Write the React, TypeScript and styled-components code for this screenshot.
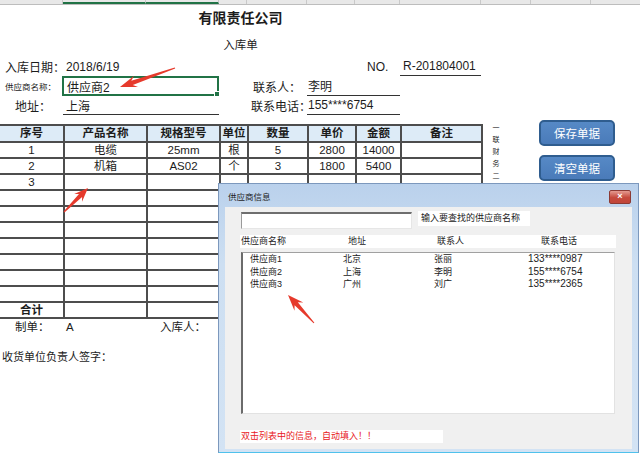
import styled, { createGlobalStyle } from "styled-components";

const FONT = `"Liberation Sans", "Noto Sans CJK SC", sans-serif`;
const COLS = [63, 83, 73, 28, 60, 48, 45, 81];
const GRID = COLS.map((w) => `${w}px`).join(" ");

const GlobalStyle = createGlobalStyle`
  html, body { margin: 0; padding: 0; background: #fff; }
  body { font-family: ${FONT}; color: #1c1c1c; }
`;

const Page = styled.div`
  position: relative;
  width: 640px;
  height: 453px;
  overflow: hidden;
  background: #fff;
`;

const ColumnStrip = styled.div`
  display: flex;
  height: 4px;
  background: #e8e8e8;
  border-bottom: 1px solid #bdbdbd;
`;

const StripCell = styled.div<{ $w: number; $sel?: boolean }>`
  flex: 0 0 ${(p) => p.$w}px;
  box-sizing: border-box;
  border-right: 1px solid #c9c9c9;
  border-bottom: ${(p) => (p.$sel ? "2px solid #217346" : "none")};
`;

const Title = styled.div`
  width: 481px;
  margin-top: 1px;
  text-align: center;
  font-size: 14px;
  font-weight: bold;
  line-height: 24px;
`;

const Subtitle = styled.div`
  width: 481px;
  margin-top: 6px;
  text-align: center;
  font-size: 11.5px;
  line-height: 18px;
`;

const InfoGrid = styled.div`
  display: grid;
  grid-template-columns: ${GRID};
  grid-template-rows: 19px 20px 19px;
  margin-top: 3px;
  font-size: 12px;
`;

const Cell = styled.div<{
  $row: number;
  $col: number;
  $span?: number;
  $pad?: number;
  $line?: boolean;
  $small?: boolean;
}>`
  grid-row: ${(p) => p.$row};
  grid-column: ${(p) => p.$col} / span ${(p) => p.$span ?? 1};
  display: flex;
  align-items: center;
  padding-left: ${(p) => p.$pad ?? 0}px;
  font-size: ${(p) => (p.$small ? "8.5px" : "12px")};
  border-bottom: ${(p) => (p.$line ? "1px solid #333" : "none")};
  white-space: nowrap;
`;

const InputBox = styled.div`
  grid-row: 2;
  grid-column: 2 / span 2;
  position: relative;
  display: flex;
  align-items: center;
  padding-left: 3px;
  border: 2px solid #217346;
  margin-left: -1px;
  font-size: 12px;
`;

const Handle = styled.span`
  position: absolute;
  right: -3px;
  bottom: -3px;
  width: 4px;
  height: 4px;
  background: #217346;
  border: 1px solid #fff;
`;

const TableRow = styled.div`
  display: flex;
  align-items: flex-start;
  margin-top: 9px;
`;

const Sheet = styled.table`
  border-collapse: collapse;
  table-layout: fixed;
  width: 483px;
  margin-left: -2px;
  font-size: 11.5px;
`;

const Col = styled.col<{ $w: number }>`
  width: ${(p) => p.$w}px;
`;

const Th = styled.th`
  height: 15px;
  padding: 0;
  border: 2px solid #4d4d4d;
  background: #ddebf7;
  font-weight: bold;
  text-align: center;
  line-height: 15px;
`;

const Td = styled.td<{ $bold?: boolean }>`
  height: 14px;
  padding: 0;
  border: 2px solid #4d4d4d;
  text-align: center;
  line-height: 14px;
  font-weight: ${(p) => (p.$bold ? "bold" : "normal")};
`;

const SideNote = styled.div`
  display: flex;
  flex-direction: column;
  margin-left: 8px;
  margin-top: -2px;
  width: 10px;
  font-size: 7px;
  line-height: 12px;
  text-align: center;
`;

const Buttons = styled.div`
  display: flex;
  flex-direction: column;
  gap: 9px;
  margin-left: 38px;
  margin-top: -4px;
`;

const Button = styled.button`
  width: 76px;
  height: 26px;
  padding: 0;
  border: 2px solid #2f5d8f;
  border-radius: 5px;
  background: linear-gradient(#5689c6, #4a7bb9);
  color: #fff;
  font-family: ${FONT};
  font-size: 11.5px;
`;

const Footer = styled.div`
  display: grid;
  grid-template-columns: ${GRID};
  margin-top: 0;
  line-height: 16px;
  font-size: 11.5px;
`;

const FootCell = styled.div<{ $pad: number }>`
  padding-left: ${(p) => p.$pad}px;
  white-space: nowrap;
`;

const Sign = styled.div`
  margin-top: 14px;
  padding-left: 2px;
  line-height: 16px;
  font-size: 11px;
`;

const Dialog = styled.div`
  position: absolute;
  left: 218px;
  top: 183px;
  width: 421px;
  height: 271px;
  box-sizing: border-box;
  display: flex;
  flex-direction: column;
  padding: 0 6px 3px 6px;
  border: 1px solid #7c98bd;
  border-bottom: 2px solid #4fc1ec;
  background: linear-gradient(#bad1ec, #cddff2 30%, #d3e3f4);
  z-index: 2;
`;

const TitleBar = styled.div`
  display: flex;
  align-items: center;
  justify-content: space-between;
  height: 23px;
  padding-left: 3px;
  font-size: 8.5px;
  color: #1e1e1e;
`;

const Close = styled.div`
  width: 20px;
  height: 12px;
  margin-right: 1px;
  margin-top: 2px;
  border: 1px solid #8c3a34;
  border-radius: 2px;
  background: linear-gradient(#e49a90, #c64a3d 55%, #c1463a);
  color: #fff;
  font-size: 9px;
  font-weight: bold;
  line-height: 11px;
  text-align: center;
`;

const DialogBody = styled.div`
  flex: 1;
  background: #f0f0f0;
  padding: 4px 0 0 16px;
  font-size: 9px;
  color: #222;
`;

const SearchRow = styled.div`
  display: flex;
  align-items: flex-start;
`;

const SearchInput = styled.div`
  width: 171px;
  height: 17px;
  margin-top: 1px;
  box-sizing: border-box;
  background: #fff;
  border-top: 2px solid #6e6e6e;
  border-left: 1px solid #9a9a9a;
  border-right: 1px solid #e6e6e6;
  border-bottom: 1px solid #e6e6e6;
`;

const HintLabel = styled.div`
  width: 109px;
  height: 15px;
  margin-left: 6px;
  padding-left: 3px;
  background: #fff;
  line-height: 15px;
`;

const ListHeader = styled.div`
  display: grid;
  grid-template-columns: 107px 89px 104px 1fr;
  width: 375px;
  height: 13px;
  margin-top: 6px;
  margin-left: -1px;
  padding-left: 1px;
  background: #fff;
  line-height: 13px;
`;

const ListBox = styled.div`
  width: 374px;
  height: 162px;
  margin-top: 4px;
  box-sizing: border-box;
  padding-left: 7px;
  background: #fff;
  border-top: 1px solid #a0a0a0;
  border-left: 2px solid #6b6b6b;
  border-right: 1px solid #e2e2e2;
  border-bottom: 1px solid #e2e2e2;
`;

const ListItem = styled.div`
  display: grid;
  grid-template-columns: 93px 91px 94px 1fr;
  line-height: 12.5px;
  white-space: nowrap;
`;

const Phone = styled.span`
  font-size: 10px;
`;

const RedNote = styled.div`
  width: 202px;
  height: 13px;
  margin-top: 16px;
  margin-left: -1px;
  padding-left: 1px;
  background: #fff;
  color: #e8201c;
  line-height: 13px;
`;

const Overlay = styled.svg`
  position: absolute;
  left: 0;
  top: 0;
  pointer-events: none;
  z-index: 5;
`;

type Arrow = { x1: number; y1: number; x2: number; y2: number; head: number; hw: number };

const arrowPoints = ({ x1, y1, x2, y2, head, hw }: Arrow) => {
  const dx = x2 - x1;
  const dy = y2 - y1;
  const len = Math.hypot(dx, dy);
  const ux = dx / len;
  const uy = dy / len;
  const px = -uy;
  const py = ux;
  const bx = x2 - ux * head;
  const by = y2 - uy * head;
  const sx = x2 - ux * head * 0.75;
  const sy = y2 - uy * head * 0.75;
  const pts = [
    [x1 + px * 0.5, y1 + py * 0.5],
    [sx + px * 2.2, sy + py * 2.2],
    [bx + px * hw, by + py * hw],
    [x2, y2],
    [bx - px * hw, by - py * hw],
    [sx - px * 2.2, sy - py * 2.2],
    [x1 - px * 0.5, y1 - py * 0.5],
  ];
  return pts.map((p) => p.map((v) => v.toFixed(1)).join(",")).join(" ");
};

const arrows: Arrow[] = [
  { x1: 175, y1: 68, x2: 120, y2: 87, head: 17, hw: 6 },
  { x1: 64, y1: 212, x2: 88, y2: 188, head: 14, hw: 5.5 },
  { x1: 314, y1: 323, x2: 288, y2: 295, head: 16, hw: 6 },
];

const items = [
  ["1", "电缆", "25mm", "根", "5", "2800", "14000", ""],
  ["2", "机箱", "AS02", "个", "3", "1800", "5400", ""],
  ["3", "", "", "", "", "", "", ""],
  ...Array.from({ length: 7 }, () => ["", "", "", "", "", "", "", ""]),
];

const heads = ["序号", "产品名称", "规格型号", "单位", "数量", "单价", "金额", "备注"];

const suppliers = [
  ["供应商1", "北京", "张丽", "133****0987"],
  ["供应商2", "上海", "李明", "155****6754"],
  ["供应商3", "广州", "刘广", "135****2365"],
];

const App = () => {
  return (
    <Page>
      <GlobalStyle />
      <ColumnStrip>
        {[...COLS, 50, 60, 60].map((w, i) => (
          <StripCell key={i} $w={w} $sel={i === 1 || i === 2} />
        ))}
      </ColumnStrip>

      <Title>有限责任公司</Title>
      <Subtitle>入库单</Subtitle>

      <InfoGrid>
        <Cell $row={1} $col={1} $pad={5}>入库日期：</Cell>
        <Cell $row={1} $col={2} $pad={3}>2018/6/19</Cell>
        <Cell $row={1} $col={7} $pad={12}>NO.</Cell>
        <Cell $row={1} $col={8} $pad={3} $line>R-201804001</Cell>

        <Cell $row={2} $col={1} $pad={5} $small>供应商名称：</Cell>
        <InputBox>
          供应商2
          <Handle />
        </InputBox>
        <Cell $row={2} $col={5} $pad={6}>联系人：</Cell>
        <Cell $row={2} $col={6} $span={2} $pad={1} $line>李明</Cell>

        <Cell $row={3} $col={1} $pad={15}>地址：</Cell>
        <Cell $row={3} $col={2} $span={2} $pad={3} $line>上海</Cell>
        <Cell $row={3} $col={5} $pad={4}>联系电话：</Cell>
        <Cell $row={3} $col={6} $span={2} $pad={1} $line>155****6754</Cell>
      </InfoGrid>

      <TableRow>
        <Sheet>
          <colgroup>
            {COLS.map((w, i) => (
              <Col key={i} $w={i === 0 ? w + 2 : w} />
            ))}
          </colgroup>
          <thead>
            <tr>
              {heads.map((h) => (
                <Th key={h}>{h}</Th>
              ))}
            </tr>
          </thead>
          <tbody>
            {items.map((r, i) => (
              <tr key={i}>
                {r.map((c, j) => (
                  <Td key={j}>{c}</Td>
                ))}
              </tr>
            ))}
            <tr>
              <Td $bold>合计</Td>
              {COLS.slice(1).map((_, j) => (
                <Td key={j} />
              ))}
            </tr>
          </tbody>
        </Sheet>
        <SideNote>
          {["一", "联", "财", "务", "二", "联"].map((c, i) => (
            <span key={i}>{c}</span>
          ))}
        </SideNote>
        <Buttons>
          <Button>保存单据</Button>
          <Button>清空单据</Button>
        </Buttons>
      </TableRow>

      <Footer>
        <FootCell $pad={15}>制单：</FootCell>
        <FootCell $pad={3}>A</FootCell>
        <FootCell $pad={14}>入库人：</FootCell>
      </Footer>
      <Sign>收货单位负责人签字：</Sign>

      <Dialog>
        <TitleBar>
          供应商信息
          <Close>×</Close>
        </TitleBar>
        <DialogBody>
          <SearchRow>
            <SearchInput />
            <HintLabel>输入要查找的供应商名称</HintLabel>
          </SearchRow>
          <ListHeader>
            <span>供应商名称</span>
            <span>地址</span>
            <span>联系人</span>
            <span>联系电话</span>
          </ListHeader>
          <ListBox>
            {suppliers.map((s) => (
              <ListItem key={s[0]}>
                <span>{s[0]}</span>
                <span>{s[1]}</span>
                <span>{s[2]}</span>
                <Phone>{s[3]}</Phone>
              </ListItem>
            ))}
          </ListBox>
          <RedNote>双击列表中的信息，自动填入！！</RedNote>
        </DialogBody>
      </Dialog>

      <Overlay width={640} height={453}>
        {arrows.map((a, i) => (
          <polygon key={i} points={arrowPoints(a)} fill="#e63a2c" />
        ))}
      </Overlay>
    </Page>
  );
};

export default App;
